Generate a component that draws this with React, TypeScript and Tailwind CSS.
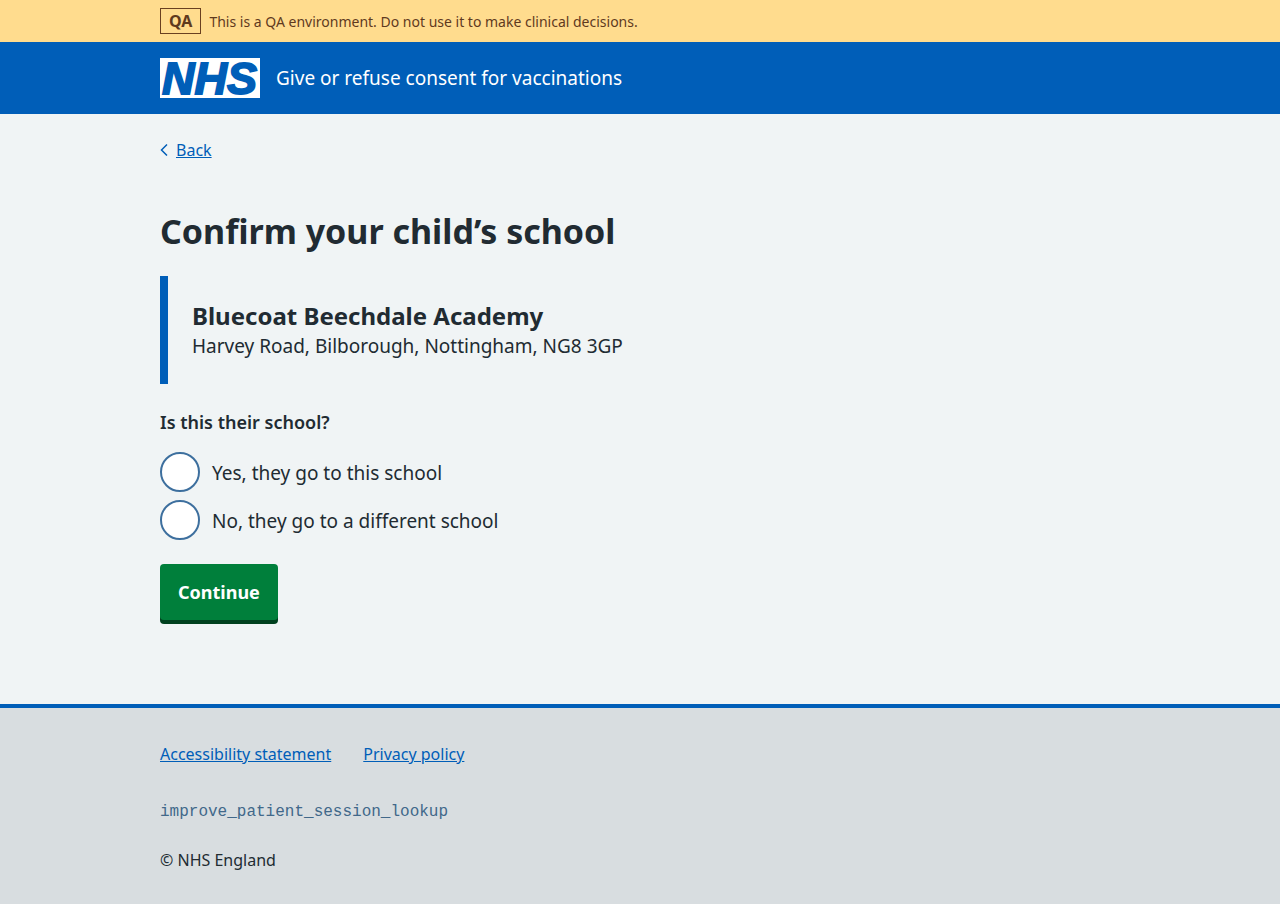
import React from "react";

const wrap = "mx-auto max-w-[960px]";
const link = "text-[#005eb8] underline";
const body = "text-[19px] leading-7";

function Banner() {
  return (
    <div className="bg-[#ffdc8e] text-[#5f3a1e]">
      <div className={`${wrap} flex items-baseline gap-2 py-2 text-sm`}>
        <strong className="border border-[#6a4020] px-2 text-base leading-6 font-bold">QA</strong>
        <span>This is a QA environment. Do not use it to make clinical decisions.</span>
      </div>
    </div>
  );
}

function Logo() {
  return (
    <svg className="h-10 w-[100px] overflow-visible" viewBox="0 0 100 40" role="img" aria-label="NHS">
      <rect width="100" height="40" fill="#fff" />
      <text
        x="2"
        y="35.6"
        fontFamily="'Liberation Sans', sans-serif"
        fontWeight="700"
        fontStyle="italic"
        fontSize="45"
        fill="#005eb8"
        stroke="#005eb8"
        strokeWidth="1.8"
      >
        NHS
      </text>
    </svg>
  );
}

function Header() {
  return (
    <header className="bg-[#005eb8] text-white">
      <div className={`${wrap} flex items-center gap-4 py-4`}>
        <Logo />
        <a href="#" className={body}>Give or refuse consent for vaccinations</a>
      </div>
    </header>
  );
}

function Radio({ id, label }: { id: string; label: string }) {
  return (
    <div className="flex items-center gap-3">
      <input
        type="radio"
        name="school"
        id={id}
        className="size-10 appearance-none rounded-full border-2 border-[#3d6f9e] bg-white checked:bg-[radial-gradient(circle,#212b32_10px,white_11px)]"
      />
      <label htmlFor={id} className={`${body} pt-0.5`}>{label}</label>
    </div>
  );
}

export default function App() {
  return (
    <div className="flex min-h-screen flex-col bg-[#f0f4f5] font-['Noto_Sans',sans-serif] text-[#212b32]">
      <Banner />
      <Header />
      <div className="grow">
        <div className={`${wrap} pt-6 pb-20`}>
          <a href="#" className="inline-flex items-center gap-2 text-base text-[#005eb8]">
            <svg className="h-3 w-2" viewBox="0 0 8 12" fill="none" stroke="currentColor" strokeWidth="1.5" aria-hidden="true">
              <path d="M7 0.5 L1.5 6 L7 11.5" />
            </svg>
            <span className="underline">Back</span>
          </a>
          <main className="pt-11">
            <h1 className="text-[34px] leading-[50px] font-bold">Confirm your child’s school</h1>
            <div className="mt-5 border-l-8 border-[#005eb8] p-6">
              <h2 className="text-2xl font-bold">Bluecoat Beechdale Academy</h2>
              <p className={body}>Harvey Road, Bilborough, Nottingham, NG8 3GP</p>
            </div>
            <form onSubmit={(e) => e.preventDefault()}>
              <fieldset className="mt-6">
                <legend className="text-lg font-semibold">Is this their school?</legend>
                <div className="mt-4 flex flex-col gap-2">
                  <Radio id="yes" label="Yes, they go to this school" />
                  <Radio id="no" label="No, they go to a different school" />
                </div>
              </fieldset>
              <button type="submit" className="mt-6 mb-1 h-14 rounded bg-[#007f3b] px-[18px] text-lg font-bold text-white shadow-[0_4px_0_#00401e]">
                Continue
              </button>
            </form>
          </main>
        </div>
      </div>
      <footer className="border-t-4 border-[#005eb8] bg-[#d8dde0] py-8.5">
        <div className={`${wrap} text-base`}>
          <ul className="flex gap-8">
            <li><a href="#" className={link}>Accessibility statement</a></li>
            <li><a href="#" className={link}>Privacy policy</a></li>
          </ul>
          <p className="mt-8"><code className="font-['Liberation_Mono',monospace] text-[#41688a]">improve_patient_session_lookup</code></p>
          <p className="mt-6">© NHS England</p>
        </div>
      </footer>
    </div>
  );
}
